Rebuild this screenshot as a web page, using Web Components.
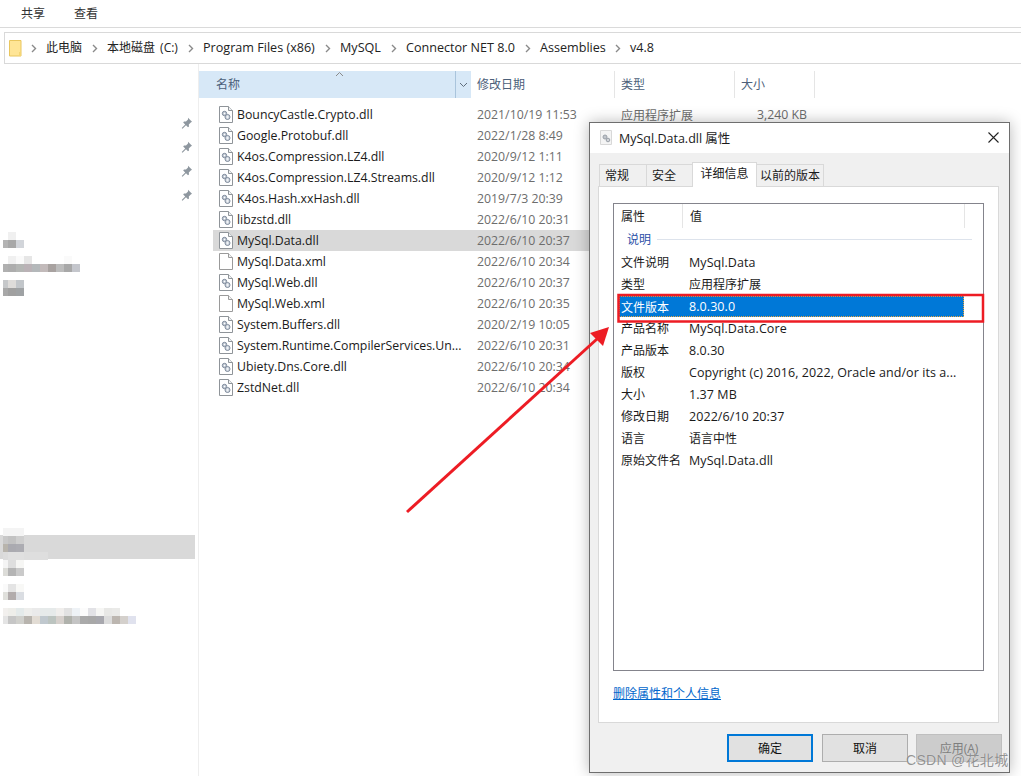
<!DOCTYPE html>
<html lang="zh">
<head>
<meta charset="utf-8">
<title>MySql.Data.dll 属性</title>
<style>
  html, body { margin: 0; height: 100%; background: #fff; overflow: hidden; }
  body { font: 12px "Open Sans", "Noto Sans CJK SC", sans-serif; color: #1a1a1a; }
</style>
</head>
<body>
<explorer-app>
  <explorer-toolbar slot="toolbar"><span>共享</span><span>查看</span></explorer-toolbar>
  <explorer-address slot="address"></explorer-address>
  <explorer-nav slot="nav"></explorer-nav>
  <file-list slot="list"></file-list>
  <props-dialog slot="dialog"></props-dialog>
  <red-annotation slot="annotation"></red-annotation>
  <water-mark slot="annotation">CSDN @花北城</water-mark>
</explorer-app>

<script>
(() => {
  const FONT = '"Open Sans", "Noto Sans CJK SC", sans-serif';
  const isLatin = s => /^[\x20-\x7e]+$/.test(s);

  // Base class: writes css + html in an open shadow root
  class Shadowed extends HTMLElement {
    constructor () {
      super();
      this.attachShadow({ mode: 'open' });
    }
    render (css, html) {
      this.shadowRoot.innerHTML = `<style>${css}</style>${html}`;
    }
  }

  const dllIcon = `
    <svg width="14" height="17" viewBox="0 0 14 17">
      <path d="M.5.5h9l4 4v12H.5z" fill="#fff" stroke="#8f9499"/>
      <path d="M9.5.5v4h4" fill="#eef0f2" stroke="#8f9499"/>
      <circle cx="5.500" cy="7.500" r="2.200" fill="#c4ccd6" stroke="#7f8b9c"/>
      <circle cx="8.500" cy="11" r="2.500" fill="#d5dbe3" stroke="#7f8b9c"/>
      <circle cx="8.500" cy="11" r=".8" fill="#fff"/>
      <circle cx="5.500" cy="7.500" r=".7" fill="#fff"/>
    </svg>`;
  const xmlIcon = `
    <svg width="14" height="17" viewBox="0 0 14 17">
      <path d="M.5.5h9l4 4v12H.5z" fill="#fff" stroke="#9a9a9a"/>
      <path d="M9.5.5v4h4" fill="#f2f2f2" stroke="#9a9a9a"/>
    </svg>`;
  const smallDllIcon = `
    <svg width="12" height="15" viewBox="0 0 12 15">
      <path d="M.5.5h11v14H.5z" fill="#f4f4f4" stroke="#d8d8d8"/>
      <circle cx="5" cy="7" r="2" fill="#c2c6cc" stroke="#9aa0a8"/>
      <circle cx="8" cy="10" r="1.800" fill="#d0d3d8" stroke="#9aa0a8"/>
    </svg>`;

  customElements.define('explorer-app', class extends Shadowed {
    connectedCallback () {
      this.render(`
        :host { display: block; position: relative; width: 1021px; height: 776px; overflow: hidden; background: #fff; }
        .main { display: flex; height: 712px; }
      `, `
        <slot name="toolbar"></slot>
        <slot name="address"></slot>
        <div class="main">
          <slot name="nav"></slot>
          <slot name="list"></slot>
        </div>
        <slot name="dialog"></slot>
        <slot name="annotation"></slot>
      `);
    }
  });

  customElements.define('explorer-toolbar', class extends Shadowed {
    connectedCallback () {
      this.render(`
        :host { display: flex; box-sizing: border-box; height: 28px; gap: 29px; padding: 5px 0 0 21px;
          border-bottom: 1px solid #dadada; font-size: 12px; line-height: 17px; color: #333; }
      `, `<slot></slot>`);
    }
  });

  customElements.define('explorer-address', class extends Shadowed {
    connectedCallback () {
      const crumbs = [
        ['此电脑', 61], ['本地磁盘 (C:)', 96], ['Program Files (x86)', 137], ['MySQL', 66],
        ['Connector NET 8.0', 134], ['Assemblies', 90], ['v4.8', 40]
      ];
      const chevron = `<svg class="chev" width="6" height="9" viewBox="0 0 6 9"><path d="M1 1l3.500 3.500L1 8" fill="none" stroke="#8a8a8a" stroke-width="1.400"/></svg>`;
      this.render(`
        :host { display: flex; align-items: center; box-sizing: border-box; height: 32px; margin: 4px 0 0 4px;
          padding: 0 0 2px 4px; border: 1px solid #d9d9d9; border-right: 0; font-size: 12px; color: #222; }
        .folder { flex: none; margin: 2px 9px 0 0; }
        .crumb { display: flex; align-items: center; flex: none; white-space: nowrap; }
        .chev { flex: none; margin: 2px 9px 0 0; }
        .lat { font-size: 12.600px; }
        .mix { word-spacing: 2px; }
      `, `
        <svg class="folder" width="13" height="17" viewBox="0 0 13 17">
          <path d="M.5.5h11.500v15.500H.5z" fill="#ffe596" stroke="#e9c65e"/>
          <path d="M10 12h2v4h-2z" fill="#f5d675"/>
        </svg>
        ${crumbs.map(([t, w]) => `<div class="crumb" style="width:${w}px">${chevron}<span class="${isLatin(t) ? 'lat' : 'mix'}">${t}</span></div>`).join('')}
      `);
    }
  });

  // Mosaic patch: rows of 8px cells, the first one cut by the left edge of the picture
  customElements.define('mosaic-patch', class extends Shadowed {
    connectedCallback () {
      const rows = this.getAttribute('rows').split('|');
      this.render(`
        :host { display: block; }
        .r { display: flex; height: 8px; padding-left: 3px; }
        i { display: block; width: 8px; height: 8px; flex: none; }
        i:first-child { width: 5px; }
      `, rows.map(r => `<div class="r">${r.trim().split(/\s+/).map(c =>
        `<i style="background:${c === '-' ? 'transparent' : '#' + c}"></i>`).join('')}</div>`).join(''));
    }
  });

  customElements.define('explorer-nav', class extends Shadowed {
    connectedCallback () {
      const pin = `<svg width="12" height="12" viewBox="0 0 12 12"><path d="M7 .8l4 4-1.200.6-2 2 .2 2-1 .8-2-2-3.500 3.500-.8-.8L4.200 7.400l-2-2 .8-1 2 .2 2-2z" fill="#8e979f"/></svg>`;
      this.render(`
        :host { display: block; flex: none; box-sizing: border-box; width: 199px; height: 100%; border-right: 1px solid #eee; }
        .pins { display: flex; flex-direction: column; align-items: flex-end; gap: 12px; padding: 53px 5px 0 0; }
        mosaic-patch { margin-bottom: 8px; }
        .first { margin-top: 31px; }
        .hl { position: relative; height: 24px; width: 195px; margin: 15px 0 1px; background: #d9d9d9; }
        .hl mosaic-patch { position: absolute; left: 0; top: -7px; margin: 0; }
      `, `
        <div class="pins">${pin}${pin}${pin}${pin}</div>
        <mosaic-patch class="first" rows="- f0f0f0 | b4b4b4 a8a8a8 d2d5da"></mosaic-patch>
        <mosaic-patch rows="- f0f0f0 fafafa e6e6e6 - - - - fafafa | b0b0b0 adadad b4b6b4 bab2b6 b4b8ba c2baba a8a2a0 bcbcbc a8a8a8 c4c6cc"></mosaic-patch>
        <mosaic-patch rows="c6c8ca dedcda c2c6ca | a8a8a8 a0a0a0 9fa2a4"></mosaic-patch>
        <div style="height:216px"></div>
        <div class="hl">
          <mosaic-patch rows="f4f4f4 f4f4f4 f4f4f4 | c8c8c8 c2c2c2 cecece | b8b4ac aaaab0 acacb2 | dcdcdc e0e0e0 e0e0e0 dedede dedede dedede"></mosaic-patch>
        </div>
        <mosaic-patch rows="f4f4f4 dedede f6f6f4 | dcdcd8 b4b4b4 cacaca"></mosaic-patch>
        <mosaic-patch rows="fafafa e4e4e4 f8f8f6 | e0e0dc b2acac dadde2"></mosaic-patch>
        <mosaic-patch rows="f2f0ee eeeeea e4eaea eeeeec eaeaea e6eaea e6eaea f0eeec e2e2e2 eef2f6 fcfcfc e2e2e6 f6f6f4 e8e8e6 eaeae8 | e4e4e4 c6c6c6 d0d0cc b8b4ae e2dcd4 c0c8ce bcc4c0 d6d0cc b0b2ac c4c4c4 aaaaaa a8a8a8 a8a8ae dcdcdc bcb6b0 d4d0cc e0e2ee"></mosaic-patch>
      `);
    }
  });

  customElements.define('file-row', class extends Shadowed {
    connectedCallback () {
      const a = n => this.getAttribute(n) || '';
      this.render(`
        :host { display: grid; grid-template-columns: 18px 240px 144px 100px 86px; align-items: center; box-sizing: border-box;
          height: 21px; margin-left: 14px; padding-left: 6px; width: 601px; font-size: 12.300px; }
        :host([selected]) { background: #d9d9d9; }
        svg { display: block; }
        .name { color: #1a1a1a; white-space: nowrap; overflow: hidden; }
        .date, .type, .size { color: #6d6d6d; white-space: nowrap; }
        .type { font-size: 12px; }
        .size { text-align: right; }
      `, `
        ${a('kind') === 'xml' ? xmlIcon : dllIcon}
        <span class="name">${a('name')}</span>
        <span class="date">${a('date')}</span>
        <span class="type">${a('type')}</span>
        <span class="size">${a('size')}</span>
      `);
    }
  });

  customElements.define('file-list', class extends Shadowed {
    connectedCallback () {
      const files = [
        ['BouncyCastle.Crypto.dll', '2021/10/19 11:53'],
        ['Google.Protobuf.dll', '2022/1/28 8:49'],
        ['K4os.Compression.LZ4.dll', '2020/9/12 1:11'],
        ['K4os.Compression.LZ4.Streams.dll', '2020/9/12 1:12'],
        ['K4os.Hash.xxHash.dll', '2019/7/3 20:39'],
        ['libzstd.dll', '2022/6/10 20:31'],
        ['MySql.Data.dll', '2022/6/10 20:37'],
        ['MySql.Data.xml', '2022/6/10 20:34'],
        ['MySql.Web.dll', '2022/6/10 20:37'],
        ['MySql.Web.xml', '2022/6/10 20:35'],
        ['System.Buffers.dll', '2020/2/19 10:05'],
        ['System.Runtime.CompilerServices.Un...', '2022/6/10 20:31'],
        ['Ubiety.Dns.Core.dll', '2022/6/10 20:34'],
        ['ZstdNet.dll', '2022/6/10 20:34']
      ];
      this.render(`
        :host { display: block; flex: 1; padding-top: 7px; }
        .head { display: flex; height: 27px; margin-bottom: 6px; color: #4c607a; font-size: 12px; }
        .col { display: flex; align-items: center; box-sizing: border-box; padding: 0 0 2px 6px; border-right: 1px solid #e5e5e5; margin: 0; }
        .col.name { position: relative; width: 272px; padding-left: 17px; background: #d7e8f7; border: 0; }
        .caret { position: absolute; left: 136px; top: 0; }
        .drop { position: absolute; right: 0; top: 0; bottom: 0; width: 16px; border-left: 1px solid #a9c4dc; box-sizing: border-box;
          display: flex; align-items: center; justify-content: center; }
      `, `
        <div class="head">
          <div class="col name">名称
            <svg class="caret" width="9" height="6" viewBox="0 0 9 6"><path d="M1 5l3.500-3.500L8 5" fill="none" stroke="#8a8a8a"/></svg>
            <div class="drop"><svg width="9" height="6" viewBox="0 0 9 6"><path d="M1 1l3.500 3.500L8 1" fill="none" stroke="#5f6d7c"/></svg></div>
          </div>
          <div class="col" style="width:144px">修改日期</div>
          <div class="col" style="width:120px">类型</div>
          <div class="col" style="width:80px">大小</div>
        </div>
        ${files.map(([n, d], i) => `<file-row name="${n}" date="${d}"
          ${n.endsWith('.xml') ? 'kind="xml"' : ''}
          ${n === 'MySql.Data.dll' ? 'selected' : ''}
          ${i === 0 ? 'type="应用程序扩展" size="3,240 KB"' : ''}></file-row>`).join('')}
      `);
    }
  });

  customElements.define('prop-row', class extends Shadowed {
    connectedCallback () {
      const v = this.getAttribute('v');
      this.render(`
        :host { display: flex; align-items: center; height: 22px; padding-left: 7px; color: #1a1a1a; white-space: nowrap; }
        :host([selected]) { box-sizing: border-box; height: 21px; margin: 1px 19px 0 5px; padding-left: 2px;
          background: #0078d7; color: #fff; outline: 1px dotted #e9a33c; outline-offset: -1px; }
        .k { width: 68px; flex: none; }
        .lat { font-size: 12.500px; letter-spacing: .07px; }
      `, `<span class="k">${this.getAttribute('k')}</span><span class="${isLatin(v) ? 'lat' : ''}">${v}</span>`);
    }
  });

  customElements.define('props-dialog', class extends Shadowed {
    connectedCallback () {
      const rows = [
        ['文件说明', 'MySql.Data'], ['类型', '应用程序扩展'], ['文件版本', '8.0.30.0', true],
        ['产品名称', 'MySql.Data.Core'], ['产品版本', '8.0.30'],
        ['版权', 'Copyright (c) 2016, 2022, Oracle and/or its a...'], ['大小', '1.37 MB'],
        ['修改日期', '2022/6/10 20:37'], ['语言', '语言中性'], ['原始文件名', 'MySql.Data.dll']
      ];
      this.render(`
        :host { position: absolute; left: 589px; top: 122px; display: flex; flex-direction: column; box-sizing: border-box;
          width: 421px; height: 651px; background: #f0f0f0; border: 1px solid #6e6e6e;
          box-shadow: 0 0 14px rgba(0,0,0,.28); font: 12px ${FONT}; color: #1a1a1a; }
        .title { display: flex; align-items: center; flex: none; box-sizing: border-box; height: 30px; padding: 0 10px 2px 10px; background: #fff; font-size: 12.500px; }
        .title span { flex: 1; margin-left: 7px; }
        .tabs { display: flex; align-items: flex-end; height: 33px; flex: none; padding-left: 9px; box-sizing: border-box; }
        .tab { display: flex; align-items: center; justify-content: center; box-sizing: border-box; height: 22px; padding-bottom: 2px;
          background: #f0f0f0; border: 1px solid #d9d9d9; border-bottom: 0; margin-right: -1px; }
        .tab.start { justify-content: flex-start; padding-left: 5px; }
        .tab.on { height: 25px; background: #fff; position: relative; z-index: 1; margin-bottom: -1px; padding-bottom: 5px; }
        .panel { display: flex; flex-direction: column; box-sizing: border-box; flex: none; height: 537px; margin: 0 10px 0 8px;
          padding: 16px 14px 0; background: #fff; border: 1px solid #d9d9d9; }
        .box { box-sizing: border-box; height: 468px; border: 1px solid #84848c; flex: none; }
        .hdr { display: flex; height: 24px; align-items: center; }
        .hdr div { display: flex; align-items: center; box-sizing: border-box; height: 24px; padding-left: 7px; border-right: 1px solid #e5e5e5; }
        .group { display: flex; align-items: center; gap: 6px; box-sizing: border-box; height: 23px; padding: 0 11px 1px 13px; color: #2b4fa8; }
        .group i { flex: 1; height: 1px; background: #dde3ec; }
        a { display: block; margin-top: 13px; color: #0066cc; text-decoration: underline; }
        .btns { display: flex; justify-content: flex-end; gap: 8px; padding: 11px 7px 0 0; }
        .btn { display: flex; align-items: center; justify-content: center; box-sizing: border-box; width: 86px; height: 28px;
          background: #e1e1e1; border: 1px solid #adadad; color: #111; }
        .btn.def { border: 2px solid #0078d7; margin-right: 1px; }
        .btn.off { background: #cccccc; border-color: #bfbfbf; color: #7e7e7e; }
      `, `
        <div class="title">
          ${smallDllIcon}
          <span>MySql.Data.dll 属性</span>
          <svg width="11" height="11" viewBox="0 0 11 11"><path d="M.5.5l10 10M10.500.5l-10 10" stroke="#222" stroke-width="1.100"/></svg>
        </div>
        <div class="tabs">
          <div class="tab start" style="width:48px">常规</div>
          <div class="tab start" style="width:47px">安全</div>
          <div class="tab on" style="width:65px">详细信息</div>
          <div class="tab" style="width:68px">以前的版本</div>
        </div>
        <div class="panel">
          <div class="box">
            <div class="hdr"><div style="width:69px">属性</div><div style="width:282px">值</div></div>
            <div class="group">说明<i></i></div>
            ${rows.map(([k, v, s]) => `<prop-row k="${k}" v="${v}" ${s ? 'selected' : ''}></prop-row>`).join('')}
          </div>
          <a href="#">删除属性和个人信息</a>
        </div>
        <div class="btns">
          <div class="btn def">确定</div><div class="btn">取消</div><div class="btn off">应用(A)</div>
        </div>
      `);
    }
  });

  customElements.define('red-annotation', class extends Shadowed {
    connectedCallback () {
      this.render(`
        :host { position: absolute; inset: 0; display: block; pointer-events: none; }
        svg { display: block; }
      `, `
        <svg width="1021" height="776" viewBox="0 0 1021 776">
          <rect x="618.500" y="295" width="364.500" height="26.500" fill="none" stroke="#ed1c24" stroke-width="2.500"/>
          <path d="M407 512L597 339" stroke="#ed1c24" stroke-width="3" fill="none"/>
          <path d="M609 327L590 333L603 346z" fill="#ed1c24"/>
        </svg>
      `);
    }
  });

  customElements.define('water-mark', class extends Shadowed {
    connectedCallback () {
      this.render(`
        :host { position: absolute; left: 906px; top: 749px; display: block; font: 14px "Liberation Sans", "Noto Sans CJK SC", sans-serif;
          color: rgba(110,110,110,.72); white-space: nowrap; letter-spacing: .3px; text-shadow: 0 0 1px rgba(255,255,255,.6); }
      `, `<slot></slot>`);
    }
  });
})();
</script>
</body>
</html>
